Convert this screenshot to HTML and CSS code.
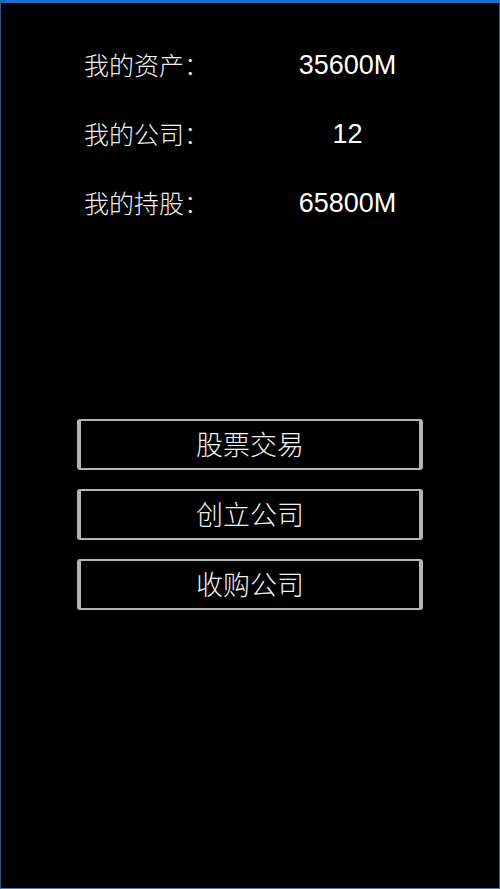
FILE: index.html
```html
<!DOCTYPE html>
<html>
<head>
    <meta charset="utf-8">
    <meta name="viewport" content="width=device-width, initial-scale=1">
    <title>我的资产</title>
    <link rel="stylesheet" href="styles.css">
</head>
<body>

<div class="screen">
    <div class="stats">
        <div class="stat-row">
            <span class="stat-label">我的资产：</span>
            <span class="stat-value">35600M</span>
        </div>
        <div class="stat-row">
            <span class="stat-label">我的公司：</span>
            <span class="stat-value">12</span>
        </div>
        <div class="stat-row">
            <span class="stat-label">我的持股：</span>
            <span class="stat-value">65800M</span>
        </div>
    </div>

    <div class="menu">
        <button class="menu-btn">股票交易</button>
        <button class="menu-btn">创立公司</button>
        <button class="menu-btn">收购公司</button>
    </div>
</div>

</body>
</html>
```

FILE: styles.css
```css
html, body {
    margin: 0;
    padding: 0;
    height: 100%;
    background-color: #000;
}

.screen {
    box-sizing: border-box;
    height: 889px;
    background-color: #000;
    border-top: 3px solid #1f6fcf;
    border-left: 1px solid #35557f;
    border-right: 1px solid #35557f;
    border-bottom: 1px solid #5a76a6;
    padding-top: 28px;
}

.stats {
    padding-left: 83px;
}

.stat-row {
    display: flex;
    align-items: center;
    height: 69px;
}

.stat-label {
    width: 180px;
    padding-bottom: 4px;
    color: #f2f2f2;
    font-family: "Noto Sans CJK SC", sans-serif;
    font-weight: 300;
    font-size: 25px;
}

.stat-value {
    width: 167px;
    text-align: center;
    color: #fff;
    font-family: "Liberation Sans", Arial, sans-serif;
    font-size: 27px;
}

.menu {
    display: flex;
    flex-direction: column;
    gap: 19px;
    width: 346px;
    margin: 181px 0 0 76px;
}

.menu-btn {
    height: 51px;
    background-color: #000;
    color: #f2f2f2;
    border-style: solid;
    border-color: #b4b4b4;
    border-width: 2px 4px 2px 4px;
    border-radius: 3px;
    font-family: "Noto Sans CJK SC", sans-serif;
    font-weight: 300;
    font-size: 27px;
    padding: 0 0 3px 0;
    cursor: pointer;
}
```
